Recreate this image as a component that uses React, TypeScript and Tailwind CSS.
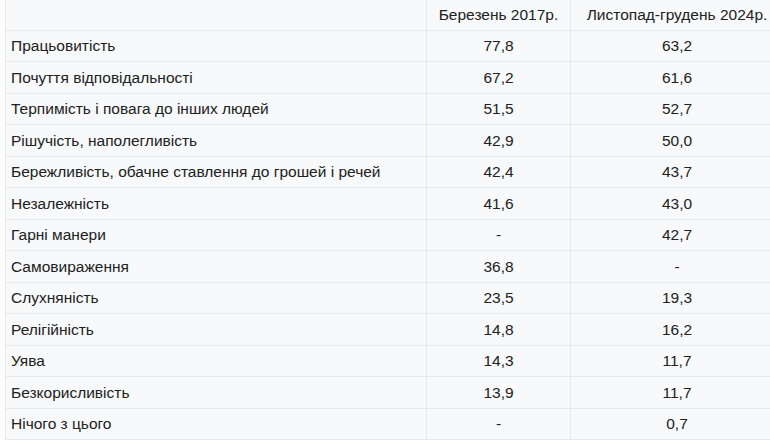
const rows: [string, string, string][] = [
  ['Працьовитість', '77,8', '63,2'],
  ['Почуття відповідальності', '67,2', '61,6'],
  ['Терпимість і повага до інших людей', '51,5', '52,7'],
  ['Рішучість, наполегливість', '42,9', '50,0'],
  ['Бережливість, обачне ставлення до грошей і речей', '42,4', '43,7'],
  ['Незалежність', '41,6', '43,0'],
  ['Гарні манери', '-', '42,7'],
  ['Самовираження', '36,8', '-'],
  ['Слухняність', '23,5', '19,3'],
  ['Релігійність', '14,8', '16,2'],
  ['Уява', '14,3', '11,7'],
  ['Безкорисливість', '13,9', '11,7'],
  ['Нічого з цього', '-', '0,7'],
];

export default function App() {
  return (
    <div className="w-[770px] h-[442px] overflow-hidden bg-white pl-[5px] font-['Liberation_Sans',Arial,sans-serif] text-[15.5px] text-[#202122]">
      <table className="border-collapse bg-[#f8f9fa] table-fixed w-[778px]">
        <colgroup>
          <col className="w-[421px]" />
          <col className="w-[144px]" />
          <col className="w-[213px]" />
        </colgroup>
        <thead>
          <tr className="h-[30px]">
            <th className="border-x border-b border-[#e6e8eb]" />
            <th className="border-x border-b border-[#e6e8eb] font-normal text-center whitespace-nowrap">
              Березень 2017р.
            </th>
            <th className="border-x border-b border-[#e6e8eb] font-normal text-center whitespace-nowrap">
              Листопад-грудень 2024р.
            </th>
          </tr>
        </thead>
        <tbody>
          {rows.map(([name, a, b]) => (
            <tr key={name} className="h-[31.5px]">
              <td className="border border-[#e6e8eb] pl-[5px] whitespace-nowrap">{name}</td>
              <td className="border border-[#e6e8eb] text-center">{a}</td>
              <td className="border border-[#e6e8eb] text-center">{b}</td>
            </tr>
          ))}
        </tbody>
      </table>
    </div>
  );
}
